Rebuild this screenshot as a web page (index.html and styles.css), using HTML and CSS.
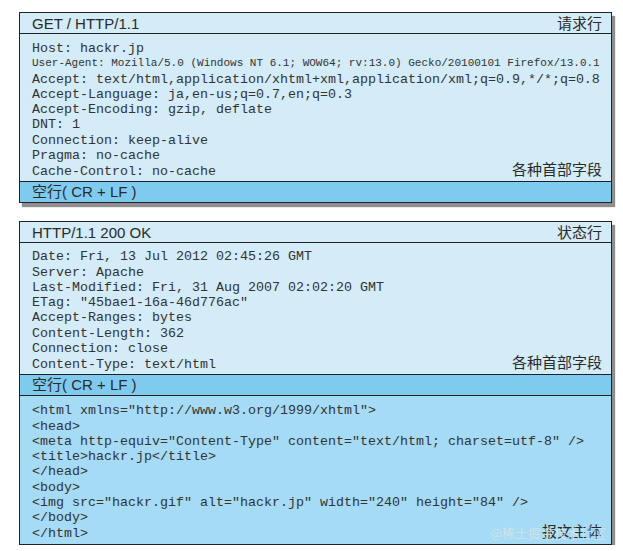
FILE: index.html
```html
<!DOCTYPE html>
<html lang="zh">
<head>
<meta charset="utf-8">
<link rel="stylesheet" href="styles.css">
</head>
<body>
<div class="page">
  <section class="msg">
    <div class="head row">
      <span class="start">GET / HTTP/1.1</span>
      <span class="label">请求行</span>
    </div>
    <div class="fields">
      <div class="line">Host: hackr.jp</div>
      <div class="line small">User-Agent: Mozilla/5.0 (Windows NT 6.1; WOW64; rv:13.0) Gecko/20100101 Firefox/13.0.1</div>
      <div class="line">Accept: text/html,application/xhtml+xml,application/xml;q=0.9,*/*;q=0.8</div>
      <div class="line">Accept-Language: ja,en-us;q=0.7,en;q=0.3</div>
      <div class="line">Accept-Encoding: gzip, deflate</div>
      <div class="line">DNT: 1</div>
      <div class="line">Connection: keep-alive</div>
      <div class="line">Pragma: no-cache</div>
      <div class="line last"><span>Cache-Control: no-cache</span><span class="label">各种首部字段</span></div>
    </div>
    <div class="blank">空行( CR + LF )</div>
  </section>

  <section class="msg">
    <div class="head row">
      <span class="start">HTTP/1.1 200 OK</span>
      <span class="label">状态行</span>
    </div>
    <div class="fields resp">
      <div class="line">Date: Fri, 13 Jul 2012 02:45:26 GMT</div>
      <div class="line">Server: Apache</div>
      <div class="line">Last-Modified: Fri, 31 Aug 2007 02:02:20 GMT</div>
      <div class="line">ETag: "45bae1-16a-46d776ac"</div>
      <div class="line">Accept-Ranges: bytes</div>
      <div class="line">Content-Length: 362</div>
      <div class="line">Connection: close</div>
      <div class="line last"><span>Content-Type: text/html</span><span class="label">各种首部字段</span></div>
    </div>
    <div class="blank">空行( CR + LF )</div>
    <div class="fields body">
      <div class="line">&lt;html xmlns="http://www.w3.org/1999/xhtml"&gt;</div>
      <div class="line">&lt;head&gt;</div>
      <div class="line">&lt;meta http-equiv="Content-Type" content="text/html; charset=utf-8" /&gt;</div>
      <div class="line">&lt;title&gt;hackr.jp&lt;/title&gt;</div>
      <div class="line">&lt;/head&gt;</div>
      <div class="line">&lt;body&gt;</div>
      <div class="line">&lt;img src="hackr.gif" alt="hackr.jp" width="240" height="84" /&gt;</div>
      <div class="line">&lt;/body&gt;</div>
      <div class="line last"><span>&lt;/html&gt;</span><span class="label">报文主体</span></div>
      <span class="watermark">@稀土掘金技术社区</span>
    </div>
  </section>
</div>
</body>
</html>
```

FILE: styles.css
```css
html, body {
  margin: 0;
  padding: 0;
  background: #ffffff;
}

.page {
  padding: 12px 0 0 19px;
  width: 593px;
  display: flex;
  flex-direction: column;
  gap: 18px;
}

.msg {
  border: 1px solid #1e2226;
  background: #d4ebf8;
  box-shadow: 3px 4px 1px #8e8e8e;
  color: #2a2a2a;
}

.row {
  display: flex;
  justify-content: space-between;
  align-items: baseline;
}

.head {
  height: 20px;
  line-height: 20px;
  padding: 0 9px 0 12px;
  border-bottom: 1px solid #1e2226;
  font-family: "Liberation Sans", Arial, "Noto Sans CJK SC", sans-serif;
  font-size: 15px;
}

.label {
  font-family: "Noto Sans CJK SC", sans-serif;
  font-size: 15px;
  color: #2a2a2a;
  white-space: nowrap;
}

.head .label {
  line-height: 20px;
}

.fields {
  padding: 7px 9px 3px 12px;
  font-family: "Liberation Mono", "Courier New", monospace;
  font-size: 13.33px;
  line-height: 15.25px;
  color: #333333;
}

.fields.resp {
  padding-top: 6px;
}

.line {
  height: 15.25px;
  white-space: pre;
}

.line.small {
  font-size: 11px;
}

.line.last {
  display: flex;
  justify-content: space-between;
  align-items: baseline;
}

.line.last .label {
  line-height: 11px;
}

.blank {
  height: 20px;
  line-height: 20px;
  padding: 0 12px;
  background: #7ecbef;
  border-top: 1px solid #1e2226;
  font-family: "Liberation Sans", Arial, "Noto Sans CJK SC", sans-serif;
  font-size: 15px;
  color: #2a2a2a;
}

.fields.body {
  position: relative;
  background: #a5dbf5;
  border-top: 1px solid #1e2226;
}

.watermark {
  position: absolute;
  right: 5px;
  bottom: 4px;
  font-family: "Noto Sans CJK SC", sans-serif;
  font-size: 13px;
  line-height: 15px;
  color: rgba(215, 226, 233, 0.9);
  white-space: nowrap;
}
```
